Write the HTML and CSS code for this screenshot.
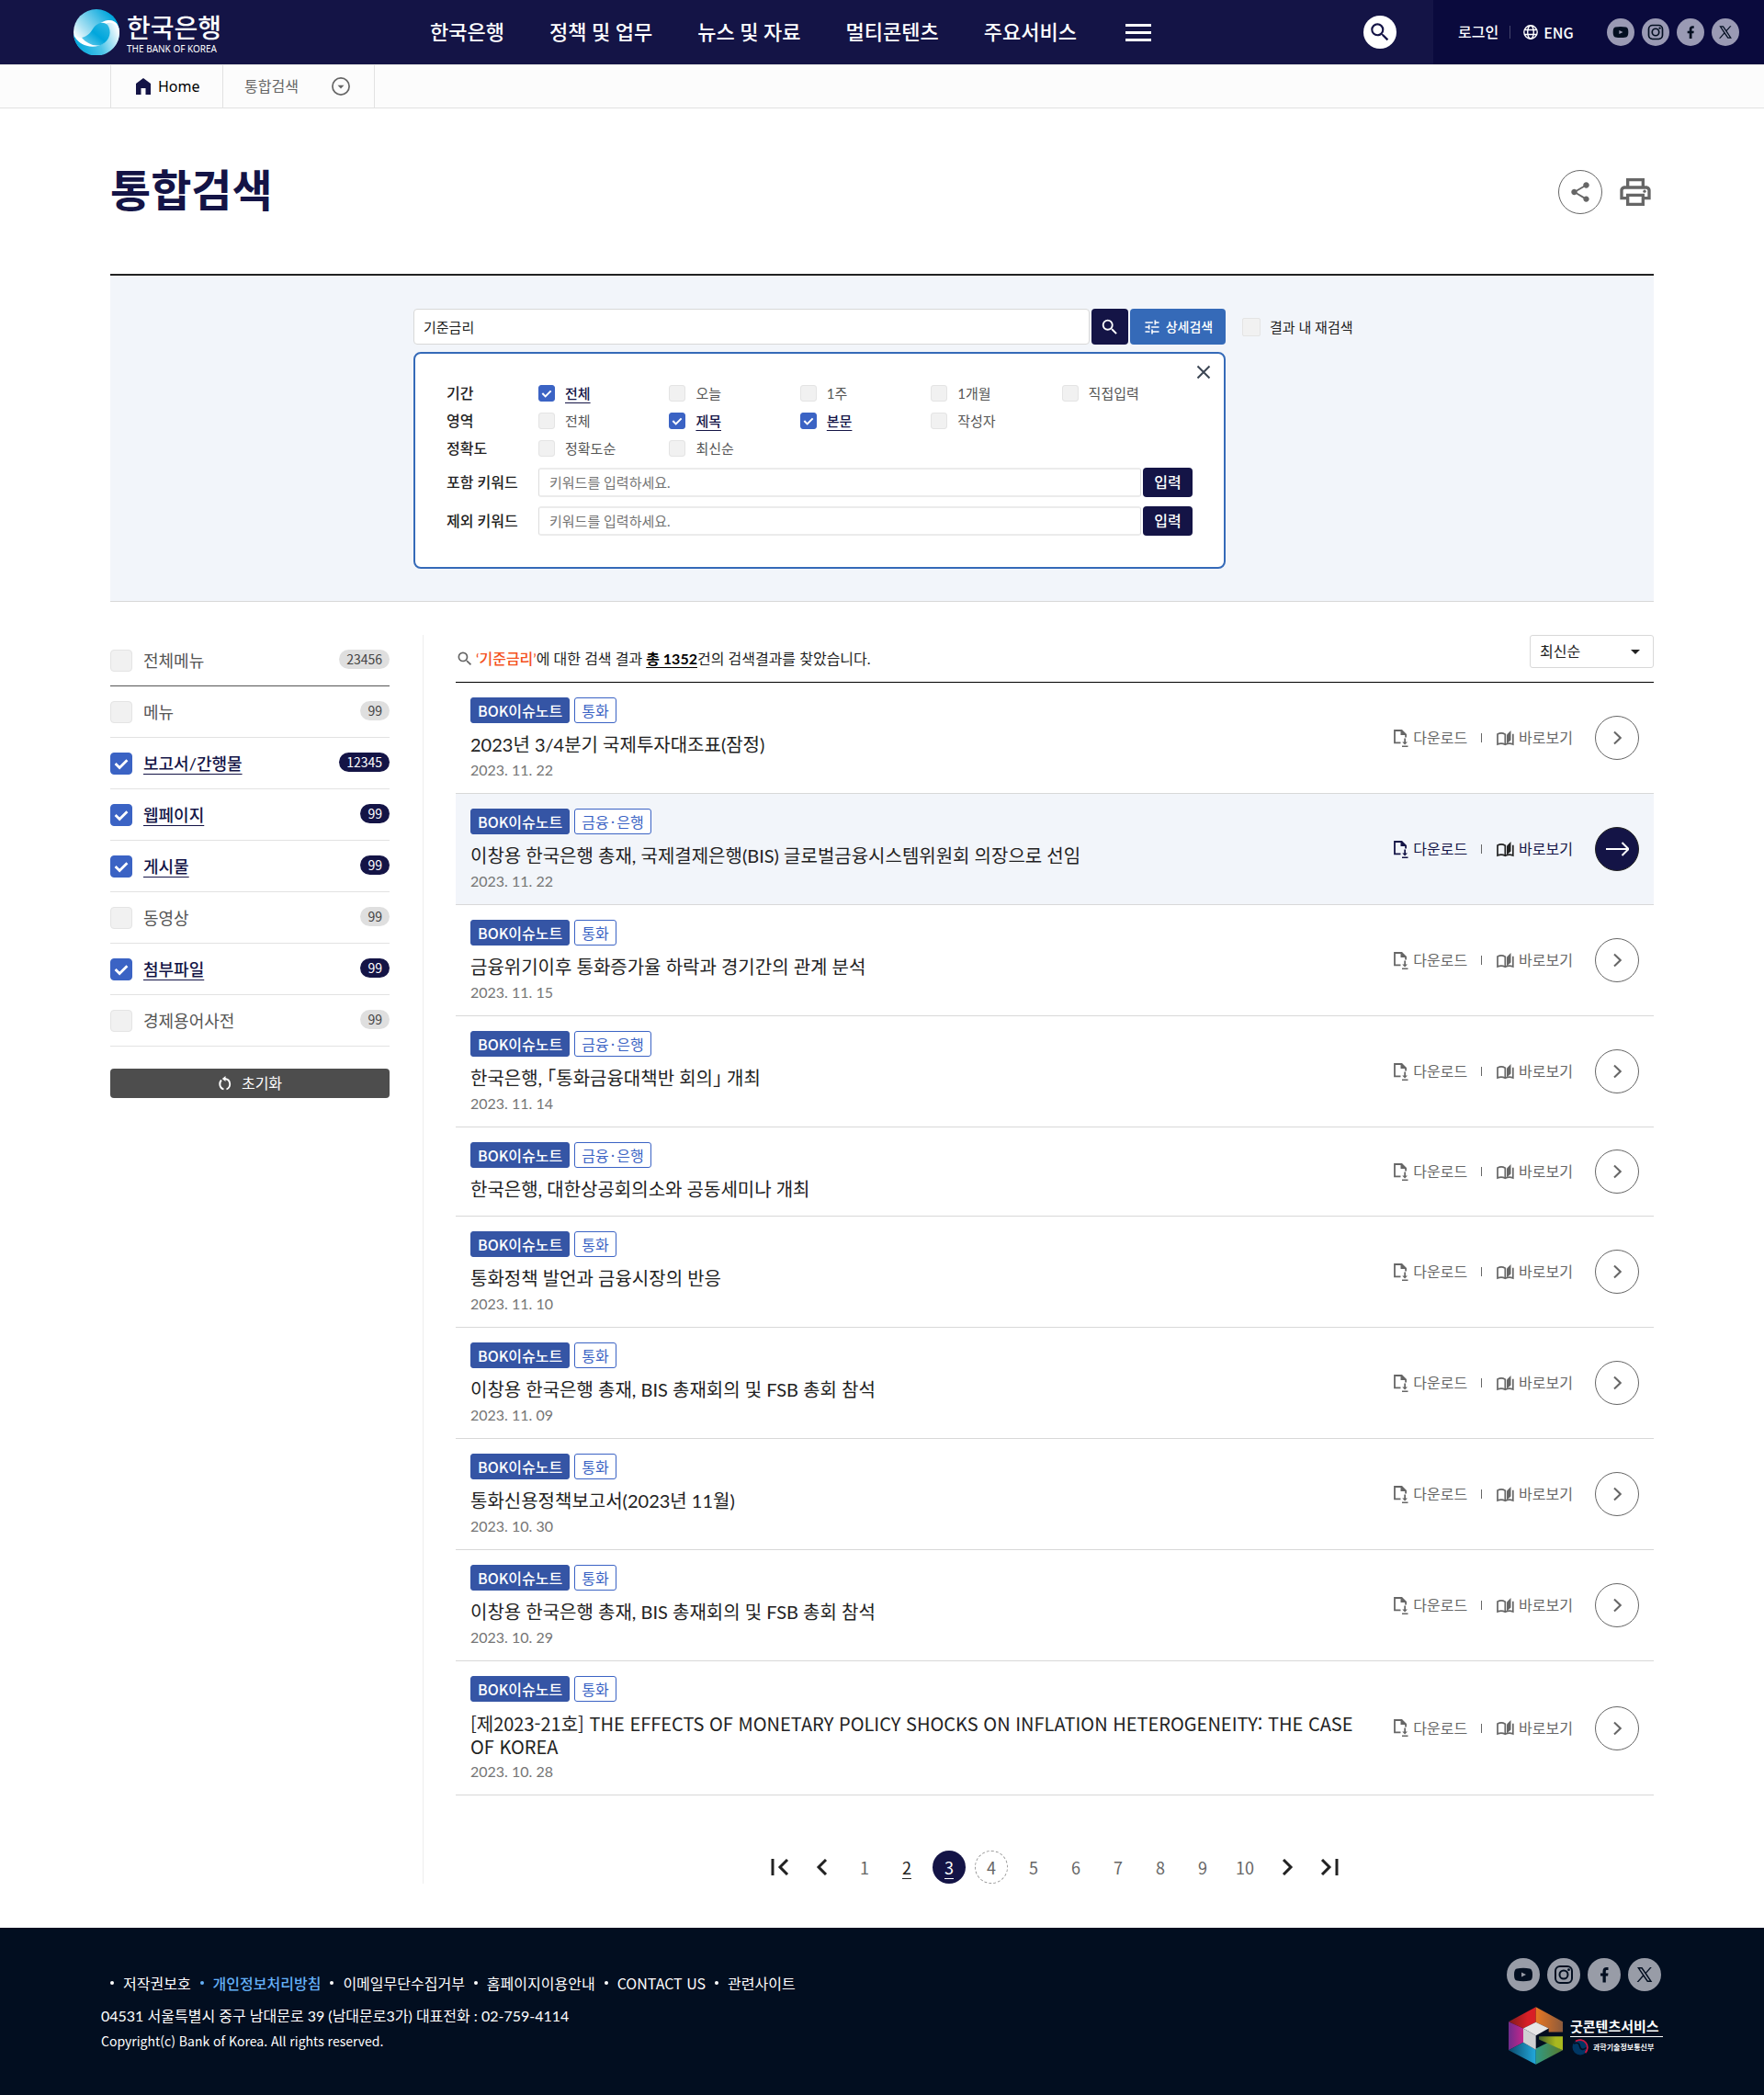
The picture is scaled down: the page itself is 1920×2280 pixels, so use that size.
FILE: index.html
```html
<!DOCTYPE html>
<html lang="ko">
<head>
<meta charset="utf-8">
<meta name="viewport" content="width=device-width, initial-scale=1">
<title>통합검색 | 한국은행</title>
<link rel="stylesheet" href="styles.css">
</head>
<body>
<svg class="sprite" aria-hidden="true">
  <symbol id="i-search" viewBox="0 0 24 24"><path d="M15.5 14h-.79l-.28-.27A6.471 6.471 0 0 0 16 9.5 6.5 6.5 0 1 0 9.5 16c1.61 0 3.09-.59 4.23-1.57l.27.28v.79l5 4.99L20.49 19l-4.99-5zm-6 0C7.01 14 5 11.99 5 9.5S7.01 5 9.5 5 14 7.01 14 9.5 11.99 14 9.5 14z"/></symbol>
  <symbol id="i-tune" viewBox="0 0 24 24"><path d="M3 17v2h6v-2H3zM3 5v2h10V5H3zm10 16v-2h8v-2h-8v-2h-2v6h2zM7 9v2H3v2h4v2h2V9H7zm14 4v-2H11v2h10zm-6-4h2V7h4V5h-4V3h-2v6z"/></symbol>
  <symbol id="i-share" viewBox="0 0 24 24"><path d="M18 16.08c-.76 0-1.44.3-1.96.77L8.91 12.7c.05-.23.09-.46.09-.7s-.04-.47-.09-.7l7.05-4.11c.54.5 1.25.81 2.04.81 1.66 0 3-1.34 3-3s-1.34-3-3-3-3 1.34-3 3c0 .24.04.47.09.7L8.04 9.81C7.5 9.31 6.79 9 6 9c-1.66 0-3 1.34-3 3s1.34 3 3 3c.79 0 1.5-.31 2.04-.81l7.12 4.16c-.05.21-.08.43-.08.65 0 1.61 1.31 2.92 2.92 2.92 1.61 0 2.92-1.31 2.92-2.92s-1.31-2.92-2.92-2.92z"/></symbol>
  <symbol id="i-print" viewBox="0 0 24 24"><path d="M19 8h-1V3H6v5H5c-1.66 0-3 1.34-3 3v6h4v4h12v-4h4v-6c0-1.66-1.34-3-3-3zM8 5h8v3H8V5zm8 12v2H8v-4h8v2zm2-2v-2H6v2H4v-4c0-.55.45-1 1-1h14c.55 0 1 .45 1 1v4h-2z"/><circle cx="18" cy="11.500" r="1"/></symbol>
  <symbol id="i-globe" viewBox="0 0 16 16"><g fill="none" stroke="currentColor" stroke-width="1.400"><circle cx="8" cy="8" r="7.200"/><ellipse cx="8" cy="8" rx="3.300" ry="7.200"/><path d="M1.300 5.500h13.400M1.300 10.500h13.400"/></g></symbol>
  <symbol id="i-youtube" viewBox="0 0 36 36"><path d="M11 11.500Q18 10 25 11.500Q28 12 28 18Q28 24 25 24.500Q18 26 11 24.500Q8 24 8 18Q8 12 11 11.500zM16 15.500v5l5-2.500z"/></symbol>
  <symbol id="i-instagram" viewBox="0 0 36 36"><g fill="none" stroke="currentColor" stroke-width="2"><rect x="9" y="9" width="18" height="18" rx="5"/><circle cx="18" cy="18" r="4.500"/></g><circle cx="23.500" cy="12.700" r="1.400"/></symbol>
  <symbol id="i-facebook" viewBox="0 0 36 36"><path d="M16.500 26.500V19.600H14v-3.200h2.500v-2.100c0-3 1.600-4.400 4.200-4.400h1.800v3h-1.400c-1 0-1.300.5-1.300 1.400v2.100h2.700l-.4 3.200h-2.300v6.900z"/></symbol>
  <symbol id="i-x" viewBox="0 0 36 36"><path fill-rule="evenodd" d="M10 10h5.400l3.800 5.400L24 10h1.800l-5.800 6.600L26.300 26h-5.400l-4.200-6-5.300 6H9.600l6.300-7.200zM12.700 11.400l9 13.200h1.900l-9-13.200z"/></symbol>
  <symbol id="i-download" viewBox="0 0 16 19"><path fill="none" stroke="currentColor" stroke-width="1.800" d="M7.500 14.300H1V1H8.500"/><path d="M7.500 0H9l5 5v3.500h-1.800V6H7.500zM11.300 9.500h1.700v4h2L12.100 16.500 9.200 13.500h2.100zM9 17.400h6.500V19H9z"/></symbol>
  <symbol id="i-book" viewBox="0 0 19 17"><path fill="none" stroke="currentColor" stroke-width="1.700" d="M9.300 15.300V4.200C7 2.800 3.500 2.700 1 4V15c2.600-1.200 6-1 8.300.3 2.400-1.300 6-1.500 8.500-.3V3.800"/><path d="M11 4.500 15.500 0V10.500L11 14.500z"/></symbol>
  <symbol id="i-next" viewBox="0 0 10 16"><path fill="none" stroke="currentColor" stroke-width="2" d="M2 1.500 8.700 8 2 14.500"/></symbol>
</svg>

<header class="header">
  <a class="brand" href="#">
    <svg class="brand-mark" viewBox="0 0 50 50" aria-hidden="true">
      <defs>
        <linearGradient id="g-top" x1="0.1" y1="0.7" x2="0.8" y2="0.1"><stop offset="0" stop-color="#fff"/><stop offset="0.3" stop-color="#a9e1f3"/><stop offset="1" stop-color="#00a6dc"/></linearGradient>
        <linearGradient id="g-low" x1="0" y1="0.600" x2="1" y2="0.300"><stop offset="0" stop-color="#00a6dc"/><stop offset="0.5" stop-color="#4cc4e8"/><stop offset="1" stop-color="#fff"/></linearGradient>
        <linearGradient id="g-in" x1="0" y1="1" x2="1" y2="0"><stop offset="0" stop-color="#7ad3ee"/><stop offset="0.5" stop-color="#00a6dc"/><stop offset="1" stop-color="#36bbe3"/></linearGradient>
      </defs>
      <circle cx="25" cy="25" r="25" fill="url(#g-top)"/>
      <path fill="url(#g-low)" d="M0 27C8 41 17 41 21 33 26 20 31 14 38 12 45 12 49 16 50 24A25 25 0 0 1 0 27z"/>
      <path fill="#fff" d="M0 27C5 33 14 32 19 27 24 19 29 13 38 12 45 12 49 16 50 24 47 16 41 13 35 16 40 22 40 31 33 37 23 44 5 41 0 27z"/>
      <path fill="url(#g-in)" d="M9 31C16 29 19 25 22 20 26 15 32 13 37 17 42 24 40 34 30 39 22 41 14 37 9 31z"/>
    </svg>
    <span class="brand-text"><strong>한국은행</strong><small>THE BANK OF KOREA</small></span>
  </a>
  <nav class="gnb" aria-label="주메뉴">
    <a href="#">한국은행</a><a href="#">정책 및 업무</a><a href="#">뉴스 및 자료</a><a href="#">멀티콘텐츠</a><a href="#">주요서비스</a>
    <button class="menu-btn" type="button" aria-label="전체메뉴"><i></i><i></i><i></i></button>
  </nav>
  <button class="head-search" type="button" aria-label="검색"><svg width="26" height="26"><use href="#i-search"/></svg></button>
  <div class="util">
    <a href="#">로그인</a><span class="util-bar"></span>
    <a class="lang" href="#"><svg width="16" height="16"><use href="#i-globe"/></svg>ENG</a>
    <ul class="sns sns-small">
      <li><a href="#" aria-label="유튜브"><svg><use href="#i-youtube"/></svg></a></li>
      <li><a href="#" aria-label="인스타그램"><svg><use href="#i-instagram"/></svg></a></li>
      <li><a href="#" aria-label="페이스북"><svg><use href="#i-facebook"/></svg></a></li>
      <li><a href="#" aria-label="엑스"><svg><use href="#i-x"/></svg></a></li>
    </ul>
  </div>
</header>

<nav class="crumbs" aria-label="현재 위치">
  <a class="crumb-home" href="#"><svg width="16" height="18" viewBox="0 0 16 18"><path d="M8 0 16 6V18H10.500V11H5.500V18H0V6z"/></svg>Home</a>
  <button class="crumb-cur" type="button">통합검색<svg width="20" height="20" viewBox="0 0 20 20"><circle cx="10" cy="10" r="9.100" fill="none" stroke="currentColor" stroke-width="1.700"/><path d="M6.500 8.700h7L10 12.500z"/></svg></button>
</nav>

<main class="wrap">
  <div class="title-row">
    <h1>통합검색</h1>
    <button class="share" type="button" aria-label="공유"><svg width="26" height="26"><use href="#i-share"/></svg></button>
    <button class="print" type="button" aria-label="인쇄"><svg width="40" height="40"><use href="#i-print"/></svg></button>
  </div>

  <form class="panel">
    <div class="search-box">
      <div class="search-row">
        <input class="query" type="text" value="기준금리" aria-label="검색어">
        <button class="btn-search" type="button" aria-label="검색"><svg width="22" height="22"><use href="#i-search"/></svg></button>
        <button class="btn-detail" type="button"><svg width="20" height="20"><use href="#i-tune"/></svg>상세검색</button>
      </div>
      <div class="detail">
        <button class="close" type="button" aria-label="닫기"><svg width="16" height="16" viewBox="0 0 16 16"><path fill="none" stroke="currentColor" stroke-width="2" d="M1.500 1.500l13 13M14.500 1.500l-13 13"/></svg></button>
        <div class="opt" role="group" aria-labelledby="o1"><span class="opt-name" id="o1">기간</span>
          <label><input class="chk chk-s" type="checkbox" checked><span>전체</span></label>
          <label><input class="chk chk-s" type="checkbox"><span>오늘</span></label>
          <label><input class="chk chk-s" type="checkbox"><span>1주</span></label>
          <label><input class="chk chk-s" type="checkbox"><span>1개월</span></label>
          <label><input class="chk chk-s" type="checkbox"><span>직접입력</span></label>
        </div>
        <div class="opt" role="group" aria-labelledby="o2"><span class="opt-name" id="o2">영역</span>
          <label><input class="chk chk-s" type="checkbox"><span>전체</span></label>
          <label><input class="chk chk-s" type="checkbox" checked><span>제목</span></label>
          <label><input class="chk chk-s" type="checkbox" checked><span>본문</span></label>
          <label><input class="chk chk-s" type="checkbox"><span>작성자</span></label>
        </div>
        <div class="opt" role="group" aria-labelledby="o3"><span class="opt-name" id="o3">정확도</span>
          <label><input class="chk chk-s" type="checkbox"><span>정확도순</span></label>
          <label><input class="chk chk-s" type="checkbox"><span>최신순</span></label>
        </div>
        <div class="kw"><label class="opt-name" for="k1">포함 키워드</label><input id="k1" type="text" placeholder="키워드를 입력하세요."><button type="button">입력</button></div>
        <div class="kw"><label class="opt-name" for="k2">제외 키워드</label><input id="k2" type="text" placeholder="키워드를 입력하세요."><button type="button">입력</button></div>
      </div>
    </div>
    <label class="again"><input class="chk chk-m" type="checkbox"><span>결과 내 재검색</span></label>
  </form>

  <div class="columns">
    <aside class="side">
      <ul>
        <li><label><input class="chk" type="checkbox"><span>전체메뉴</span></label><em>23456</em></li>
        <li><label><input class="chk" type="checkbox"><span>메뉴</span></label><em>99</em></li>
        <li class="on"><label><input class="chk" type="checkbox" checked><span>보고서/간행물</span></label><em>12345</em></li>
        <li class="on"><label><input class="chk" type="checkbox" checked><span>웹페이지</span></label><em>99</em></li>
        <li class="on"><label><input class="chk" type="checkbox" checked><span>게시물</span></label><em>99</em></li>
        <li><label><input class="chk" type="checkbox"><span>동영상</span></label><em>99</em></li>
        <li class="on"><label><input class="chk" type="checkbox" checked><span>첨부파일</span></label><em>99</em></li>
        <li><label><input class="chk" type="checkbox"><span>경제용어사전</span></label><em>99</em></li>
      </ul>
      <button class="reset" type="button"><svg width="16" height="16" viewBox="0 0 16 16"><path fill="none" stroke="currentColor" stroke-width="1.800" d="M6.500 14.500A6 6 0 0 1 4 4.500M8 3A6 6 0 0 1 9.500 14.500"/><path d="M8.500 0v6L4.800 3z"/></svg>초기화</button>
    </aside>

    <section class="results">
      <div class="res-head">
        <p><svg width="20" height="20"><use href="#i-search"/></svg><span><b class="word">‘기준금리’</b>에 대한 검색 결과 <b class="total">총 1352</b>건의 검색결과를 찾았습니다.</span></p>
        <select aria-label="정렬"><option>최신순</option></select>
      </div>
      <ul class="list">
        <li><div class="body"><div class="tags"><span class="tag">BOK이슈노트</span><span class="tag line">통화</span></div><h2><a href="#">2023년 3/4분기 국제투자대조표(잠정)</a></h2><time>2023. 11. 22</time></div>
          <div class="acts"><a href="#"><svg class="ic-dl"><use href="#i-download"/></svg>다운로드</a><a href="#"><svg class="ic-bk"><use href="#i-book"/></svg>바로보기</a></div><a class="go" href="#" aria-label="상세보기"><svg width="10" height="16"><use href="#i-next"/></svg></a></li>
        <li class="on"><div class="body"><div class="tags"><span class="tag">BOK이슈노트</span><span class="tag line">금융<i>·</i>은행</span></div><h2><a href="#">이창용 한국은행 총재, 국제결제은행(BIS) 글로벌금융시스템위원회 의장으로 선임</a></h2><time>2023. 11. 22</time></div>
          <div class="acts"><a href="#"><svg class="ic-dl"><use href="#i-download"/></svg>다운로드</a><a href="#"><svg class="ic-bk"><use href="#i-book"/></svg>바로보기</a></div><a class="go" href="#" aria-label="상세보기"><svg width="26" height="16" viewBox="0 0 26 16"><path fill="none" stroke="currentColor" stroke-width="2" d="M1 8H25M18.500 1 25.500 8 18.500 15"/></svg></a></li>
        <li><div class="body"><div class="tags"><span class="tag">BOK이슈노트</span><span class="tag line">통화</span></div><h2><a href="#">금융위기이후 통화증가율 하락과 경기간의 관계 분석</a></h2><time>2023. 11. 15</time></div>
          <div class="acts"><a href="#"><svg class="ic-dl"><use href="#i-download"/></svg>다운로드</a><a href="#"><svg class="ic-bk"><use href="#i-book"/></svg>바로보기</a></div><a class="go" href="#" aria-label="상세보기"><svg width="10" height="16"><use href="#i-next"/></svg></a></li>
        <li><div class="body"><div class="tags"><span class="tag">BOK이슈노트</span><span class="tag line">금융<i>·</i>은행</span></div><h2><a href="#">한국은행, 「통화금융대책반 회의」 개최</a></h2><time>2023. 11. 14</time></div>
          <div class="acts"><a href="#"><svg class="ic-dl"><use href="#i-download"/></svg>다운로드</a><a href="#"><svg class="ic-bk"><use href="#i-book"/></svg>바로보기</a></div><a class="go" href="#" aria-label="상세보기"><svg width="10" height="16"><use href="#i-next"/></svg></a></li>
        <li><div class="body"><div class="tags"><span class="tag">BOK이슈노트</span><span class="tag line">금융<i>·</i>은행</span></div><h2><a href="#">한국은행, 대한상공회의소와 공동세미나 개최</a></h2></div>
          <div class="acts"><a href="#"><svg class="ic-dl"><use href="#i-download"/></svg>다운로드</a><a href="#"><svg class="ic-bk"><use href="#i-book"/></svg>바로보기</a></div><a class="go" href="#" aria-label="상세보기"><svg width="10" height="16"><use href="#i-next"/></svg></a></li>
        <li><div class="body"><div class="tags"><span class="tag">BOK이슈노트</span><span class="tag line">통화</span></div><h2><a href="#">통화정책 발언과 금융시장의 반응</a></h2><time>2023. 11. 10</time></div>
          <div class="acts"><a href="#"><svg class="ic-dl"><use href="#i-download"/></svg>다운로드</a><a href="#"><svg class="ic-bk"><use href="#i-book"/></svg>바로보기</a></div><a class="go" href="#" aria-label="상세보기"><svg width="10" height="16"><use href="#i-next"/></svg></a></li>
        <li><div class="body"><div class="tags"><span class="tag">BOK이슈노트</span><span class="tag line">통화</span></div><h2><a href="#">이창용 한국은행 총재, BIS 총재회의 및 FSB 총회 참석</a></h2><time>2023. 11. 09</time></div>
          <div class="acts"><a href="#"><svg class="ic-dl"><use href="#i-download"/></svg>다운로드</a><a href="#"><svg class="ic-bk"><use href="#i-book"/></svg>바로보기</a></div><a class="go" href="#" aria-label="상세보기"><svg width="10" height="16"><use href="#i-next"/></svg></a></li>
        <li><div class="body"><div class="tags"><span class="tag">BOK이슈노트</span><span class="tag line">통화</span></div><h2><a href="#">통화신용정책보고서(2023년 11월)</a></h2><time>2023. 10. 30</time></div>
          <div class="acts"><a href="#"><svg class="ic-dl"><use href="#i-download"/></svg>다운로드</a><a href="#"><svg class="ic-bk"><use href="#i-book"/></svg>바로보기</a></div><a class="go" href="#" aria-label="상세보기"><svg width="10" height="16"><use href="#i-next"/></svg></a></li>
        <li><div class="body"><div class="tags"><span class="tag">BOK이슈노트</span><span class="tag line">통화</span></div><h2><a href="#">이창용 한국은행 총재, BIS 총재회의 및 FSB 총회 참석</a></h2><time>2023. 10. 29</time></div>
          <div class="acts"><a href="#"><svg class="ic-dl"><use href="#i-download"/></svg>다운로드</a><a href="#"><svg class="ic-bk"><use href="#i-book"/></svg>바로보기</a></div><a class="go" href="#" aria-label="상세보기"><svg width="10" height="16"><use href="#i-next"/></svg></a></li>
        <li><div class="body"><div class="tags"><span class="tag">BOK이슈노트</span><span class="tag line">통화</span></div><h2><a class="en" href="#">[제2023-21호] THE EFFECTS OF MONETARY POLICY SHOCKS ON INFLATION HETEROGENEITY: THE CASE OF KOREA</a></h2><time>2023. 10. 28</time></div>
          <div class="acts"><a href="#"><svg class="ic-dl"><use href="#i-download"/></svg>다운로드</a><a href="#"><svg class="ic-bk"><use href="#i-book"/></svg>바로보기</a></div><a class="go" href="#" aria-label="상세보기"><svg width="10" height="16"><use href="#i-next"/></svg></a></li>
      </ul>
      <nav class="pages" aria-label="페이지">
        <a class="arrow" href="#" aria-label="처음"><svg width="20" height="18" viewBox="0 0 20 18"><path d="M2 0V18M18 1 10 9l8 8"/></svg></a>
        <a class="arrow" href="#" aria-label="이전"><svg width="20" height="18" viewBox="0 0 20 18"><path d="M14 1 6 9l8 8"/></svg></a>
        <a href="#">1</a><a class="hover" href="#">2</a><a class="now" href="#" aria-current="page">3</a><a class="focus" href="#">4</a><a href="#">5</a><a href="#">6</a><a href="#">7</a><a href="#">8</a><a href="#">9</a><a href="#">10</a>
        <a class="arrow" href="#" aria-label="다음"><svg width="20" height="18" viewBox="0 0 20 18"><path d="M6 1 14 9l-8 8"/></svg></a>
        <a class="arrow" href="#" aria-label="마지막"><svg width="20" height="18" viewBox="0 0 20 18"><path d="M18 0V18M2 1 10 9l-8 8"/></svg></a>
      </nav>
    </section>
  </div>
</main>

<footer class="footer">
  <div class="foot-info">
    <ul class="foot-links">
      <li><a href="#">저작권보호</a></li><li class="point"><a href="#">개인정보처리방침</a></li><li><a href="#">이메일무단수집거부</a></li><li><a href="#">홈페이지이용안내</a></li><li><a href="#">CONTACT US</a></li><li><a href="#">관련사이트</a></li>
    </ul>
    <address>04531 서울특별시 중구 남대문로 39 (남대문로3가) 대표전화 : 02-759-4114</address>
    <p>Copyright(c) Bank of Korea. All rights reserved.</p>
  </div>
  <div class="foot-side">
    <ul class="sns">
      <li><a href="#" aria-label="유튜브"><svg><use href="#i-youtube"/></svg></a></li>
      <li><a href="#" aria-label="인스타그램"><svg><use href="#i-instagram"/></svg></a></li>
      <li><a href="#" aria-label="페이스북"><svg><use href="#i-facebook"/></svg></a></li>
      <li><a href="#" aria-label="엑스"><svg><use href="#i-x"/></svg></a></li>
    </ul>
    <div class="good">
      <svg width="59" height="63" viewBox="126 252 177 188" aria-hidden="true">
        <defs>
          <linearGradient id="h1"><stop offset="0" stop-color="#7d1a1c"/><stop offset="0.700" stop-color="#d81f26"/></linearGradient>
          <linearGradient id="h2"><stop offset="0" stop-color="#e87722"/><stop offset="1" stop-color="#8b5a3c"/></linearGradient>
          <linearGradient id="h3"><stop offset="0" stop-color="#6f2c8c"/><stop offset="1" stop-color="#c4268a"/></linearGradient>
          <linearGradient id="h4"><stop offset="0" stop-color="#0b4a6b"/><stop offset="1" stop-color="#22a9dd"/></linearGradient>
          <linearGradient id="h5"><stop offset="0" stop-color="#2f9a86"/><stop offset="1" stop-color="#5a7a2a"/></linearGradient>
          <linearGradient id="h6"><stop offset="0" stop-color="#44622a"/><stop offset="0.700" stop-color="#a9b81f"/></linearGradient>
        </defs>
        <path fill="url(#h1)" d="M215 252 126 300 174 322 215 302z"/>
        <path fill="url(#h2)" d="M215 252 303 300V334H257V322L215 302z"/>
        <path fill="url(#h3)" d="M126 300 174 322V368L126 393z"/>
        <path fill="url(#h4)" d="M126 393 174 368 215 392V440z"/>
        <path fill="url(#h5)" d="M215 440V388L257 367 303 393z"/>
        <path fill="url(#h6)" d="M225 348H303V393L225 358z"/>
        <path fill="#e6e6e6" d="M215 302 257 322 215 345 174 322z"/>
        <path fill="#cfd0d2" d="M174 322 215 345V392L174 368z"/>
      </svg>
      <div class="good-text"><strong>굿콘텐츠서비스</strong>
        <span><svg width="18" height="18" viewBox="0 0 18 18" aria-hidden="true"><circle cx="9" cy="9" r="8.500" fill="#003764"/><path fill="none" stroke="#cd163f" stroke-width="1.800" d="M4 2.500A8.200 8.200 0 0 1 14.500 15"/><path fill="none" stroke="#020e20" stroke-width="1.600" d="M2 5C6 3 8 5 8.500 8S12 13 15.500 9.500"/></svg>과학기술정보통신부</span></div>
    </div>
  </div>
</footer>
</body>
</html>
```
FILE: styles.css
```css
:root {
  --navy: #141446;
  --blue: #356ab8;
  --check: #3b63c4;
  --text: #222;
  --sub: #666;
  --line: #d8d8d8;
  --pale: #f2f5fa;
}
* { box-sizing: border-box; }
body, h1, h2, p, ul { margin: 0; padding: 0; }
ul { list-style: none; }
body { background: #fff; color: var(--text); font: 16px/24px Lato, "Noto Sans CJK KR", sans-serif; }
a { color: inherit; text-decoration: none; }
button, input, select { font: inherit; color: inherit; margin: 0; }
button { border: 0; padding: 0; background: none; cursor: pointer; display: flex; align-items: center; justify-content: center; }
svg { fill: currentColor; flex: none; display: block; }
.sprite { position: absolute; width: 0; height: 0; }
.lang, .tag, .side em, .en, .pages, .foot-links, .foot-info p { font-family: "Noto Sans CJK KR", sans-serif; }

/* header */
.header { display: flex; align-items: center; height: 70px; padding-left: 80px; background: var(--navy); color: #fff; }
.brand { display: flex; align-items: center; gap: 8px; width: 160px; }
.brand-mark { width: 50px; height: 50px; }
.brand-text { white-space: nowrap; }
.brand-text strong { display: block; font-size: 28px; line-height: 36px; font-weight: 500; }
.brand-text small { display: block; font: 10px/10px "Noto Sans", sans-serif; }
.gnb { display: flex; align-items: center; gap: 49px; margin-left: 228px; font-size: 22px; font-weight: 500; white-space: nowrap; }
.menu-btn { flex-direction: column; gap: 5px; margin-left: 4px; }
.menu-btn i { width: 28px; height: 3px; background: #fff; }
.head-search { width: 36px; height: 36px; margin-left: auto; border-radius: 50%; background: #fff; color: var(--navy); }
.util { display: flex; align-items: center; align-self: stretch; width: 360px; margin-left: 40px; padding: 0 27px 0 27px; background: #0a0a3d; font-weight: 500; }
.util-bar { width: 1px; height: 14px; margin: 0 14px 0 12px; background: #45456c; }
.lang { display: flex; align-items: center; gap: 6px; }
.sns { display: flex; gap: 8px; }
.sns a { display: block; width: 36px; height: 36px; border-radius: 50%; background: #989ca7; color: #020e20; }
.sns svg { width: 100%; height: 100%; }
.sns-small { margin-left: auto; }
.sns-small a { width: 30px; height: 30px; background: #9a9ab4; }

/* breadcrumb */
.crumbs { display: flex; height: 48px; padding-left: 120px; border-top: 1px solid #e2e2e2; border-bottom: 1px solid #e2e2e2; background: #fcfcfc; }
.crumb-home { display: flex; align-items: center; gap: 8px; width: 123px; padding-left: 27px; border-left: 1px solid #e2e2e2; border-right: 1px solid #e2e2e2; color: #000; font-family: "Noto Sans", sans-serif; }
.crumb-home svg { color: var(--navy); }
.crumb-cur { justify-content: flex-start; gap: 36px; width: 165px; padding-left: 23px; border-right: 1px solid #e2e2e2; color: var(--sub); }

/* page */
.wrap { margin: 0 120px; }
.title-row { display: flex; align-items: center; height: 180px; padding-top: 2px; }
h1 { margin-right: auto; padding-bottom: 4px; color: var(--navy); font-size: 48px; line-height: 60px; font-weight: 700; }
.share { width: 48px; height: 48px; border: 1px solid var(--sub); border-radius: 50%; color: var(--sub); }
.print { margin-left: 16px; color: var(--sub); }

/* check boxes */
.chk { appearance: none; flex: none; width: 24px; height: 24px; border: 1px solid #e4e4e4; border-radius: 4px; background: #f1f1f1; }
.chk-m { width: 20px; height: 20px; border-radius: 2px; }
.chk-s { width: 18px; height: 18px; border-radius: 3px; }
.chk:checked { border-color: var(--check); background: var(--check) url("data:image/svg+xml,%3Csvg xmlns='http://www.w3.org/2000/svg' viewBox='0 0 24 24'%3E%3Cpath d='M5 12l5 5 9-9' fill='none' stroke='%23fff' stroke-width='3'/%3E%3C/svg%3E") center / 100%; }
label { display: flex; align-items: center; }
.chk:checked + span { color: var(--navy); font-weight: 500; text-decoration: underline; text-decoration-thickness: 1px; text-underline-offset: 4px; }

/* search panel */
.panel { display: flex; justify-content: center; padding: 36px 0 35px; border-top: 2px solid #222; border-bottom: 1px solid var(--line); background: var(--pale); font-size: 15px; }
.search-box { width: 884px; }
.search-row { display: flex; gap: 2px; height: 39px; }
.query { flex: 1; min-width: 0; padding: 0 10px; border: 1px solid var(--line); border-radius: 4px; background: #fff; }
.btn-search { width: 40px; border-radius: 4px; background: var(--navy); color: #fff; }
.btn-detail { width: 104px; gap: 5px; border-radius: 4px; background: var(--blue); color: #fff; font-size: 14px; font-weight: 500; }
.again { width: 118px; height: 39px; margin-left: 18px; gap: 10px; white-space: nowrap; }
.detail { position: relative; margin-top: 8px; padding: 28px 34px 34px; border: 2px solid var(--blue); border-radius: 8px; background: #fff; }
.close { position: absolute; top: 12px; right: 14px; width: 16px; height: 16px; color: #3c4654; }
.opt { display: grid; grid-template-columns: 100px repeat(5, 1fr); align-items: center; height: 30px; color: #555; }
.opt label { gap: 11px; }
.opt-name { width: 100px; color: var(--text); font-size: 16px; font-weight: 500; }
.kw { display: flex; gap: 2px; height: 32px; margin-top: 6px; }
.kw + .kw { margin-top: 10px; }
.kw .opt-name { width: 98px; }
.kw input { flex: 1; min-width: 0; padding: 0 11px; border: 1px solid #ddd; border-top: 2px solid #ebebeb; border-bottom: 2px solid #ebebeb; border-radius: 3px; background: #fff; }
.kw input::placeholder { color: #757575; opacity: 1; }
.kw button { width: 54px; border-radius: 4px; background: var(--navy); color: #fff; font-size: 16px; font-weight: 500; }

/* columns */
.columns { display: grid; grid-template-columns: 341px 1fr; padding: 36px 0 48px; }
.side { padding-right: 36px; border-right: 1px solid #eee; }
.side li { display: flex; align-items: center; justify-content: space-between; height: 56px; border-bottom: 1px solid #e2e2e2; color: #555; font-size: 18px; }
.side li:first-child { border-bottom-color: #555; }
.side label { gap: 12px; }
.side em { height: 21px; margin-bottom: 3px; padding: 0 8px; border-radius: 11px; background: #dfdfdf; color: #444; font-size: 14px; line-height: 20px; font-style: normal; }
.side .on em { background: var(--navy); color: #fff; }
.reset { width: 100%; height: 32px; margin-top: 24px; gap: 10px; border-radius: 4px; background: #4d4d4d; color: #fff; }

/* results */
.results { padding-left: 35px; }
.res-head { display: flex; justify-content: space-between; height: 52px; border-bottom: 1px solid #000; }
.res-head p { display: flex; align-items: center; height: 52px; gap: 2px; }
.res-head p svg { color: var(--sub); }
.res-head b { font-weight: 500; }
.res-head .word { color: #f4511e; }
.res-head .total { color: #000; font-weight: 700; text-decoration: underline; text-decoration-thickness: 1px; text-underline-offset: 3px; }
select { appearance: none; width: 135px; height: 36px; padding: 0 10px; border: 1px solid var(--line); border-radius: 3px; background: #fff url("data:image/svg+xml,%3Csvg xmlns='http://www.w3.org/2000/svg' viewBox='0 0 10 5'%3E%3Cpath d='M0 0h10L5 5z' fill='%23222'/%3E%3C/svg%3E") right 14px center / 10px 5px no-repeat; }
.list li { display: flex; align-items: center; padding: 16px; border-bottom: 1px solid var(--line); }
.list li.on { background: var(--pale); }
.body { flex: 1; margin-right: 40px; }
.tags { display: flex; gap: 5px; }
.tag { height: 28px; padding: 0 7px; border: 1px solid #3555a5; border-radius: 3px; background: #3555a5; color: #fff; line-height: 26px; font-weight: 500; }
.tag.line { border-color: var(--check); background: #fff; color: var(--check); font-weight: 400; }
.tag i { padding: 0 2px; font-style: normal; }
h2 { margin-top: 11px; font-size: 20px; line-height: 25px; font-weight: 400; font-feature-settings: "halt"; }
.en { display: block; }
time { display: block; margin-top: 6px; color: #757575; line-height: 18px; }
.acts { display: flex; color: var(--sub); white-space: nowrap; }
.acts a { display: flex; align-items: center; gap: 5px; }
.acts a + a { position: relative; margin-left: 32px; }
.acts a + a::before { content: ""; position: absolute; left: -17px; top: 7px; width: 1px; height: 10px; background: var(--sub); }
.ic-dl { width: 16px; height: 19px; }
.ic-bk { width: 19px; height: 17px; }
.on .acts { color: var(--navy); }
.on .ic-bk { color: #222; }
.go { display: flex; align-items: center; justify-content: center; width: 48px; height: 48px; margin-left: 24px; border: 1px solid var(--sub); border-radius: 50%; background: #fff; color: var(--sub); }
.on .go { border-color: #222; background: var(--navy); color: #fff; }

/* pagination */
.pages { display: flex; justify-content: center; gap: 10px; margin-top: 60px; color: var(--sub); font-size: 18px; }
.pages a { display: flex; align-items: center; justify-content: center; width: 36px; height: 36px; border-radius: 50%; text-underline-offset: 4px; }
.pages .arrow { color: #222; }
.pages .arrow path { fill: none; stroke: currentColor; stroke-width: 3; }
.pages .hover { color: #222; text-decoration: underline; }
.pages .now { background: var(--navy); color: #fff; text-decoration: underline; }
.pages .focus { border: 1px dashed #999; }

/* footer */
.footer { display: flex; justify-content: space-between; min-height: 182px; padding: 33px 112px 33px 110px; background: #020e20; color: #fff; }
.foot-info { padding-top: 15px; }
.foot-links { display: flex; gap: 10px; padding-left: 10px; }
.foot-links li { display: flex; align-items: center; gap: 10px; }
.foot-links li::before { content: ""; width: 4px; height: 4px; border-radius: 50%; background: currentColor; }
.foot-links .point { color: #64b0f7; font-weight: 500; }
address { margin-top: 12px; font-style: normal; }
.foot-info p { margin-top: 3px; font-size: 14px; }
.foot-side { width: 168px; white-space: nowrap; }
.good { display: flex; gap: 8px; margin: 17px 0 0 2px; }
.good-text { padding-top: 10px; }
.good-text strong { display: block; width: 101px; height: 23px; border-bottom: 1px solid #fff; font-size: 15px; line-height: 22px; font-weight: 700; }
.good-text span { display: flex; align-items: center; gap: 5px; margin-top: 2px; padding-left: 2px; font-size: 8px; font-weight: 700; line-height: 18px; }
```
